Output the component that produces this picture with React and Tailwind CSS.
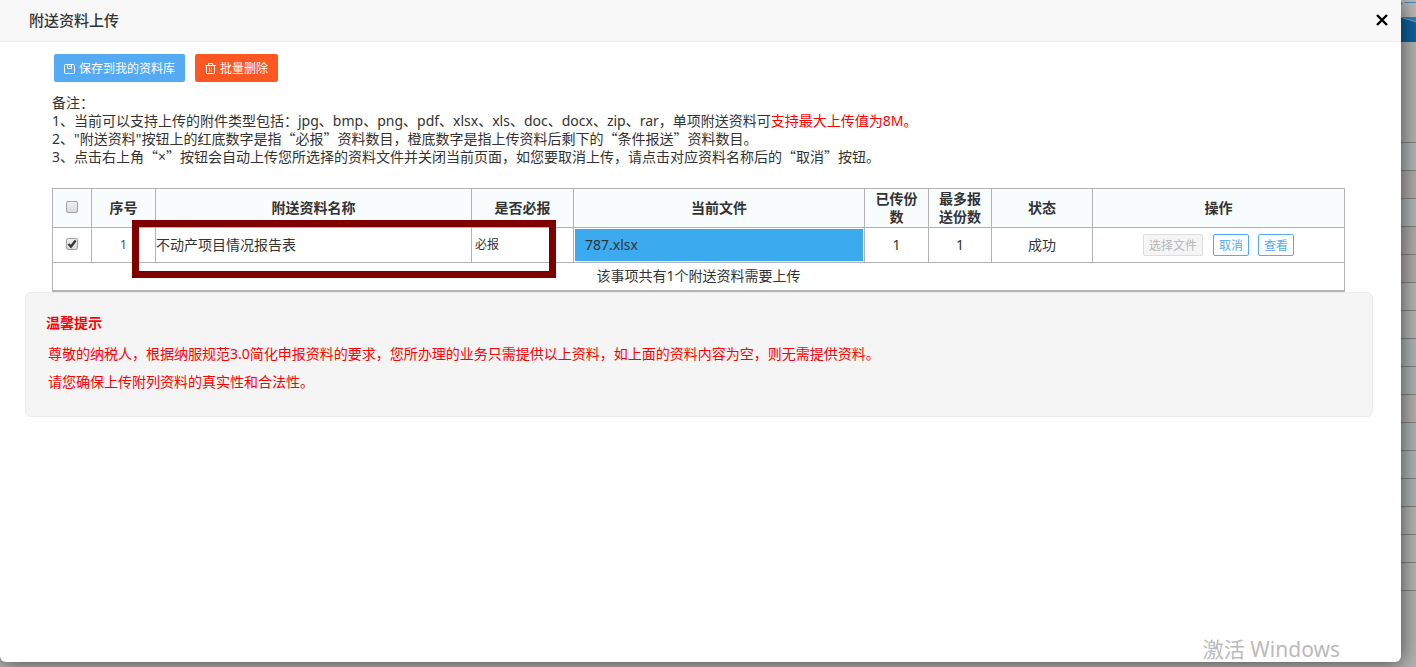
import React from "react";

const stripes = [
  "bg-[#b0b7b9]",
  "bg-[#b0abab]",
  "bg-[#b0b7b9]",
  "bg-[#b0abab]",
  "bg-[#b0abab]",
  "bg-[#b4b4b4]",
  "bg-[#b4b4b4]",
  "bg-[#adb4b5]",
  "bg-[#adb4b5]",
  "bg-[#b4b0b0]",
  "bg-[#adb4b5]",
  "bg-[#adb4b5]",
  "bg-[#adb4b5]",
  "bg-[#b4b4b4]",
  "bg-[#b4b4b4]",
  "bg-[#b4b4b4]",
];

function Backdrop() {
  return (
    <div aria-hidden="true" className="flex h-full flex-col overflow-hidden bg-[#b2b2b2]">
      <div className="flex h-[17px] shrink-0 items-start justify-end overflow-hidden bg-[#b9b9b9]">
        <span className="-mt-1 whitespace-nowrap text-[12px] leading-4 text-[#3f86bd]">下一</span>
      </div>
      <div className="flex h-[25px] shrink-0 justify-end bg-[#0f6199]">
        <svg width="16" height="25" viewBox="0 0 16 25">
          <path d="M0 0H16V5Z" fill="#2f82b8" />
          <path d="M0 0L16 5" stroke="#5fa3cc" strokeWidth="1" />
        </svg>
      </div>
      <div className="h-[101px] shrink-0 border-b border-[#808080]" />
      {stripes.map((color, i) => (
        <div key={i} className={`h-7 shrink-0 border-b border-[#808080] ${color}`} />
      ))}
    </div>
  );
}

function SaveIcon() {
  return (
    <svg width="11" height="12" viewBox="0 0 11 12" fill="none" stroke="currentColor" strokeWidth="1" aria-hidden="true">
      <path d="M1.5 1.5H9.5L10.5 2.5V9.5Q10.5 10.5 9.5 10.5H1.5Q.5 10.5 .5 9.5V2.5Q.5 1.5 1.5 1.5Z" />
      <path d="M3.5 1.5V5.5H7.5V1.5M6 2.5V4" />
    </svg>
  );
}

function TrashIcon() {
  return (
    <svg width="11" height="12" viewBox="0 0 11 12" fill="none" stroke="currentColor" strokeWidth="1" aria-hidden="true">
      <path d="M0 2.5H11M3.5 2.5V.5H7.5V2.5M1.5 2.5V9.5Q1.5 10.5 2.5 10.5H8.5Q9.5 10.5 9.5 9.5V2.5M4.5 4.5V9M6.5 4.5V9" />
    </svg>
  );
}

function Check({ label, defaultChecked }) {
  return (
    <span className="grid place-items-center pb-[2px]">
      <input
        type="checkbox"
        aria-label={label}
        defaultChecked={defaultChecked}
        className="peer col-start-1 row-start-1 size-3 appearance-none rounded-[2px] border border-[#a3a3a3] bg-linear-to-b from-[#efefef] to-[#dadada]"
      />
      <svg
        viewBox="0 0 12 12"
        className="pointer-events-none invisible col-start-1 row-start-1 size-3 peer-checked:visible"
        fill="none"
        stroke="#3a3a3a"
        strokeWidth="2.4"
      >
        <path d="M2.5 6L5 8.6L9.6 2.6" />
      </svg>
    </span>
  );
}

function Quoted({ children }) {
  return (
    <>
      <span className="font-['Noto_Sans_CJK_SC',sans-serif] leading-none">“</span>
      {children}
      <span className="font-['Noto_Sans_CJK_SC',sans-serif] leading-none">”</span>
    </>
  );
}

const th = "border border-[#b3b3b3] p-0 text-center font-bold";
const td = "border border-[#b3b3b3] p-0 text-center";
const small = "h-[22px] rounded-[2px] border px-[5px] pt-px text-[12px] leading-5";

export default function App() {
  return (
    <div
      lang="zh-CN"
      className="relative h-screen overflow-hidden font-['Noto_Sans','Noto_Sans_CJK_SC',sans-serif] text-[14px] leading-[18px] text-[#333]"
    >
      <Backdrop />
      <section
        role="dialog"
        aria-labelledby="dialog-title"
        className="absolute inset-0 mr-[15px] mb-[5px] rounded-b-md bg-white shadow-[1px_1px_20px_rgba(0,0,0,0.6)]"
      >
        <header className="flex h-[42px] items-center justify-between border-b border-[#eee] bg-[#f8f8f8] pr-[13px] pb-[2px] pl-[29px]">
          <h1 id="dialog-title" className="text-[15px] font-medium">附送资料上传</h1>
          <button type="button" aria-label="关闭" className="text-black">
            <svg width="12" height="12" viewBox="0 0 12 12" stroke="currentColor" strokeWidth="2.4">
              <path d="M1 1L11 11M11 1L1 11" />
            </svg>
          </button>
        </header>

        <div className="flex gap-[10px] pt-3 pl-[54px] text-[12px] text-white">
          <button type="button" className="flex h-7 items-center gap-1 rounded-[2px] bg-[#54abf4] px-[10px] pt-px">
            <SaveIcon />
            保存到我的资料库
          </button>
          <button type="button" className="flex h-7 items-center gap-1 rounded-[2px] bg-[#ff5722] px-[10px] pt-px">
            <TrashIcon />
            批量删除
          </button>
        </div>

        <div className="mt-3 pl-[52px]">
          <p>备注：</p>
          <p>
            1、当前可以支持上传的附件类型包括：jpg、bmp、png、pdf、xlsx、xls、doc、docx、zip、rar，单项附送资料可
            <span className="text-[#f00]">支持最大上传值为8M。</span>
          </p>
          <p>
            2、"附送资料"按钮上的红底数字是指<Quoted>必报</Quoted>资料数目，橙底数字是指上传资料后剩下的<Quoted>条件报送</Quoted>资料数目。
          </p>
          <p>
            3、点击右上角<Quoted>×</Quoted>按钮会自动上传您所选择的资料文件并关闭当前页面，如您要取消上传，请点击对应资料名称后的<Quoted>取消</Quoted>按钮。
          </p>
        </div>

        <div className="relative mt-[22px] mr-14 ml-[52px]">
          <table className="w-full table-fixed border-collapse border-b-2 border-[#b3b3b3]">
            <colgroup>
              <col className="w-[39px]" />
              <col className="w-[64px]" />
              <col className="w-[316px]" />
              <col className="w-[102px]" />
              <col className="w-[291px]" />
              <col className="w-[64px]" />
              <col className="w-[63px]" />
              <col className="w-[101px]" />
              <col className="w-[252px]" />
            </colgroup>
            <thead>
              <tr className="h-[39px] bg-[#f8fcfd]">
                <th className={th}><Check label="全选" /></th>
                <th className={th}>序号</th>
                <th className={th}>附送资料名称</th>
                <th className={th}>是否必报</th>
                <th className={th}>当前文件</th>
                <th className={`${th} px-2`}>已传份数</th>
                <th className={`${th} px-2`}>最多报送份数</th>
                <th className={th}>状态</th>
                <th className={th}>操作</th>
              </tr>
            </thead>
            <tbody>
              <tr className="h-[35px]">
                <td className={td}><Check label="选择 不动产项目情况报告表" defaultChecked /></td>
                <td className={`${td} text-[12px] text-[#44505c]`}>1</td>
                <td className="border border-[#b3b3b3] p-0 text-left">不动产项目情况报告表</td>
                <td className="border border-[#b3b3b3] py-0 pr-0 pl-[3px] text-left text-[12px]">必报</td>
                <td className="border border-[#b3b3b3] p-px text-left">
                  <div className="flex h-8 items-center bg-[#3caaef] pl-[10px]">787.xlsx</div>
                </td>
                <td className={td}>1</td>
                <td className={td}>1</td>
                <td className={td}>成功</td>
                <td className={td}>
                  <div className="flex justify-center">
                    <button type="button" disabled className={`${small} border-[#ddd] bg-[#f5f5f5] text-[#b5b5b5]`}>选择文件</button>
                    <button type="button" className={`${small} ml-[10px] border-[#54abf4] text-[#54abf4]`}>取消</button>
                    <button type="button" className={`${small} ml-[9px] border-[#54abf4] text-[#54abf4]`}>查看</button>
                  </div>
                </td>
              </tr>
              <tr className="h-[28px]">
                <td colSpan={9} className="border-x border-t border-[#b3b3b3] p-0 text-center">该事项共有1个附送资料需要上传</td>
              </tr>
            </tbody>
          </table>
          <div className="pointer-events-none absolute top-8 left-20 h-[58px] w-[424px] border-[7px] border-[#800000]" />
        </div>

        <aside className="mr-7 ml-[25px] h-[125px] rounded-md border border-[#ebebeb] bg-[#f5f5f5] pt-4 pl-5 leading-7 text-[#f00]">
          <h2 className="font-bold">温馨提示</h2>
          <div className="mt-[3px] pl-[2px]">
            <p>尊敬的纳税人，根据纳服规范3.0简化申报资料的要求，您所办理的业务只需提供以上资料，如上面的资料内容为空，则无需提供资料。</p>
            <p>请您确保上传附列资料的真实性和合法性。</p>
          </div>
        </aside>
      </section>
      <p className="pointer-events-none absolute right-[76px] bottom-1 text-[21px] leading-7 text-[#bbb]">激活 Windows</p>
    </div>
  );
}
